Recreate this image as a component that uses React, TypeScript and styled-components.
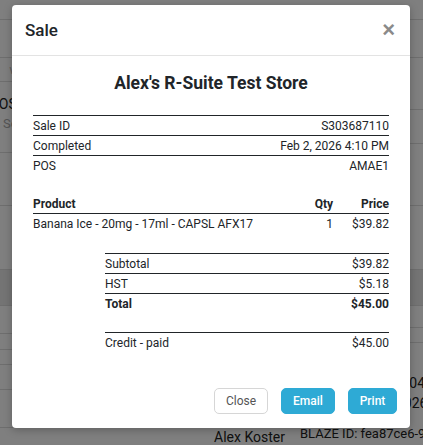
import React from 'react'
import styled, { createGlobalStyle } from 'styled-components'

const GlobalStyle = createGlobalStyle`
  html, body {
    margin: 0;
    padding: 0;
    background: #ffffff;
    font-family: Roboto, "Liberation Sans", Arial, sans-serif;
    color: #212529;
  }
  * { box-sizing: border-box; }
`

// page that sits under the dialog
const Page = styled.div`
  position: relative;
  width: 423px;
  height: 445px;
  overflow: hidden;
  display: grid;
  grid-template-columns: 200px 1fr;
`

const PageColumn = styled.div`
  display: flex;
  flex-direction: column;
`

const PageRow = styled.div<{ $h: number; $shade?: boolean; $line?: boolean }>`
  height: ${p => p.$h}px;
  flex-shrink: 0;
  display: flex;
  align-items: center;
  font-size: 14px;
  color: #222;
  background: ${p => (p.$shade ? '#e8e8e8' : 'transparent')};
  border-bottom: ${p => (p.$line === false ? 'none' : '1px solid #dcdcdc')};
`

const SearchBox = styled.span`
  width: 30px;
  overflow: hidden;
  white-space: nowrap;
  color: #aaa;
  font-size: 13px;
  padding-left: 3px;
`

const Chevron = styled.span`
  color: #bbb;
  font-size: 12px;
  padding-left: 8px;
`

const PageText = styled.span<{ $indent: number; $size?: number }>`
  padding-left: ${p => p.$indent}px;
  white-space: nowrap;
  font-size: ${p => p.$size ?? 14}px;
  color: #222;
`

const Overlay = styled.div`
  position: absolute;
  inset: 0;
  background: rgba(0, 0, 0, 0.5);
`

const Modal = styled.div`
  position: absolute;
  top: 5px;
  left: 12px;
  width: 398px;
  height: 423px;
  background: #fff;
  border-radius: 4px;
  box-shadow: 0 2px 8px rgba(0, 0, 0, 0.25);
  display: flex;
  flex-direction: column;
`

const Header = styled.div`
  height: 51px;
  padding: 0 13px;
  display: flex;
  align-items: center;
  justify-content: space-between;
  border-bottom: 1px solid #e3e3e3;
`

const HeaderTitle = styled.h5`
  margin: 0;
  font-size: 17px;
  font-weight: 500;
  color: #212529;
`

const CloseX = styled.button`
  border: none;
  background: none;
  padding: 0 2px;
  font-size: 22px;
  font-weight: 700;
  line-height: 1;
  color: #8a8a8a;
  font-family: "Liberation Sans", Arial, sans-serif;
  cursor: pointer;
`

const Body = styled.div`
  padding: 16px 21px 0;
  display: flex;
  flex-direction: column;
`

const StoreName = styled.h4`
  margin: 0 0 21px;
  text-align: center;
  font-size: 17.5px;
  line-height: 22px;
  font-weight: 700;
`

const Table = styled.div<{ $indent?: number; $gap?: number }>`
  margin-left: ${p => p.$indent ?? 0}px;
  margin-bottom: ${p => p.$gap ?? 0}px;
  display: flex;
  flex-direction: column;
`

const Row = styled.div<{ $bold?: boolean; $top?: boolean; $bottom?: boolean; $cols?: string }>`
  display: grid;
  grid-template-columns: ${p => p.$cols ?? '1fr auto'};
  align-items: center;
  height: 20px;
  font-size: 12px;
  font-weight: ${p => (p.$bold ? 700 : 400)};
  border-top: ${p => (p.$top ? '1px solid #212529' : 'none')};
  border-bottom: ${p => (p.$bottom ? '1px solid #212529' : 'none')};
  white-space: nowrap;
`

const Cell = styled.span<{ $right?: boolean }>`
  text-align: ${p => (p.$right ? 'right' : 'left')};
`

const Spacer = styled.div<{ $h: number }>`
  height: ${p => p.$h}px;
`

const Footer = styled.div`
  margin-top: auto;
  padding: 0 13px 14px;
  display: flex;
  justify-content: flex-end;
  gap: 13px;
`

const Button = styled.button<{ $primary?: boolean; $w: number }>`
  width: ${p => p.$w}px;
  height: 26px;
  border-radius: 5px;
  font-family: Roboto, "Liberation Sans", Arial, sans-serif;
  font-size: 12px;
  font-weight: ${p => (p.$primary ? 500 : 400)};
  color: ${p => (p.$primary ? '#fff' : '#555')};
  background: ${p => (p.$primary ? '#2eaad5' : '#fff')};
  border: 1px solid ${p => (p.$primary ? '#2eaad5' : '#d6d6d6')};
  cursor: pointer;
  padding: 0;
`

const saleInfo = [
  ['Sale ID', 'S303687110'],
  ['Completed', 'Feb 2, 2026 4:10 PM'],
  ['POS', 'AMAE1'],
]

const totals = [
  { label: 'Subtotal', value: '$39.82' },
  { label: 'HST', value: '$5.18' },
  { label: 'Total', value: '$45.00', bold: true },
]

const App = () => {
  return (
    <>
      <GlobalStyle />
      <Page>
        <PageColumn>
          <PageRow $h={20} />
          <PageRow $h={38} />
          <PageRow $h={24}><Chevron>∨</Chevron></PageRow>
          <PageRow $h={12} $line={false} />
          <PageRow $h={20} $line={false}><PageText $indent={0} style={{ marginLeft: -10 }}>POS</PageText></PageRow>
          <PageRow $h={19} $line={false}><SearchBox>Search</SearchBox></PageRow>
          <PageRow $h={20} />
          <PageRow $h={53} />
          <PageRow $h={64} />
          <PageRow $h={36} $shade />
          <PageRow $h={28} />
          <PageRow $h={16} />
          <PageRow $h={15} />
          <PageRow $h={25} />
          <PageRow $h={38} />
          <PageRow $h={17} $line={false}><PageText $indent={214}>Alex Koster</PageText></PageRow>
        </PageColumn>
        <PageColumn>
          <PageRow $h={20} />
          <PageRow $h={38} />
          <PageRow $h={52} />
          <PageRow $h={34} />
          <PageRow $h={62} />
          <PageRow $h={64} />
          <PageRow $h={36} $shade />
          <PageRow $h={22} />
          <PageRow $h={15} />
          <PageRow $h={30} $line={false} />
          <PageRow $h={20} $line={false}><PageText $indent={183}>Feb 04</PageText></PageRow>
          <PageRow $h={20} $line={false}><PageText $indent={196}>2026</PageText></PageRow>
          <PageRow $h={12} $line={false} />
          <PageRow $h={17} $line={false}><PageText $indent={100} $size={13}>BLAZE ID: fea87ce6-9514</PageText></PageRow>
        </PageColumn>

        <Overlay />

        <Modal>
          <Header>
            <HeaderTitle>Sale</HeaderTitle>
            <CloseX aria-label="Close">×</CloseX>
          </Header>

          <Body>
            <StoreName>Alex's R-Suite Test Store</StoreName>

            <Table $gap={19}>
              {saleInfo.map(([label, value]) => (
                <Row key={label} $top>
                  <Cell>{label}</Cell>
                  <Cell $right>{value}</Cell>
                </Row>
              ))}
            </Table>

            <Table $gap={19}>
              <Row $bold $bottom $cols="1fr 40px 56px">
                <Cell>Product</Cell>
                <Cell $right>Qty</Cell>
                <Cell $right>Price</Cell>
              </Row>
              <Row $cols="1fr 40px 56px">
                <Cell>Banana Ice - 20mg - 17ml - CAPSL AFX17</Cell>
                <Cell $right>1</Cell>
                <Cell $right>$39.82</Cell>
              </Row>
            </Table>

            <Table $indent={72}>
              {totals.map(t => (
                <Row key={t.label} $top $bold={t.bold}>
                  <Cell>{t.label}</Cell>
                  <Cell $right>{t.value}</Cell>
                </Row>
              ))}
              <Spacer $h={19} />
              <Row $top>
                <Cell>Credit - paid</Cell>
                <Cell $right>$45.00</Cell>
              </Row>
            </Table>
          </Body>

          <Footer>
            <Button $w={54}>Close</Button>
            <Button $w={54} $primary>Email</Button>
            <Button $w={49} $primary>Print</Button>
          </Footer>
        </Modal>
      </Page>
    </>
  )
}

export default App
